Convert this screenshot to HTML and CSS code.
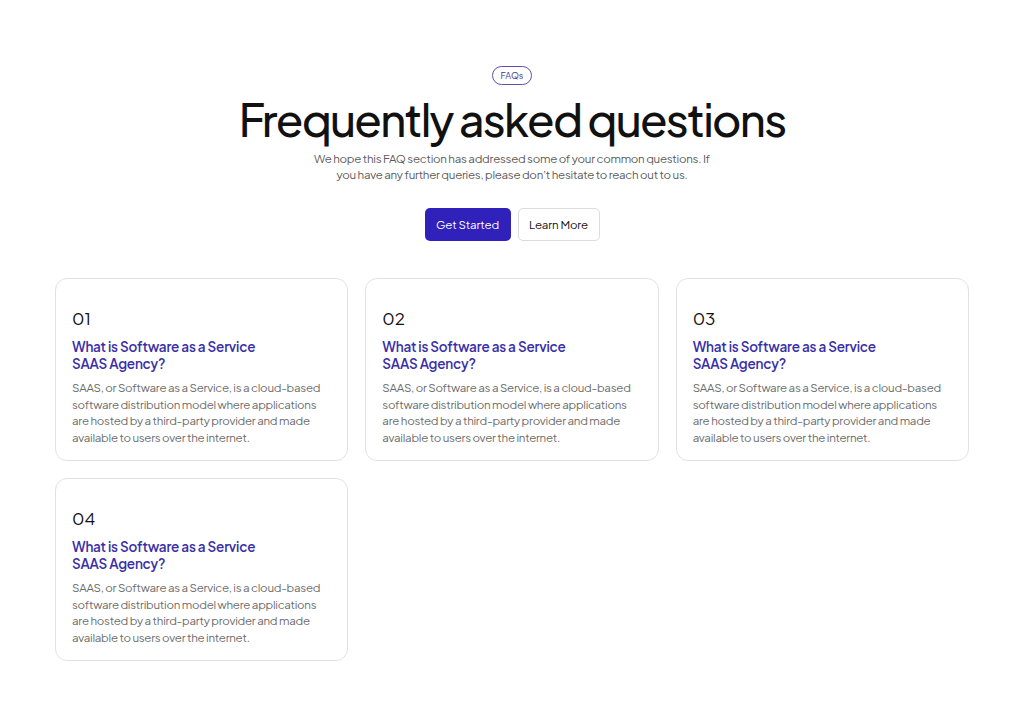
FILE: index.html
```html
<!DOCTYPE html>
<html lang="en">
<head>
<meta charset="utf-8">
<title>FAQs</title>
<link rel="stylesheet" href="styles.css">
</head>
<body>
<main class="faq">
  <header class="faq-head">
    <span class="badge">FAQs</span>
    <h1 class="title">Frequently asked questions</h1>
    <p class="lead">We hope this FAQ section has addressed some of your common questions. If you have any further queries, please don’t hesitate to reach out to us.</p>
    <div class="actions">
      <a class="btn btn-primary" href="#">Get Started</a>
      <a class="btn btn-outline" href="#">Learn More</a>
    </div>
  </header>
  <section class="grid">
    <article class="card">
      <div class="num">01</div>
      <h3 class="q">What is Software as a Service<br>SAAS Agency?</h3>
      <p class="a">SAAS, or Software as a Service, is a cloud-based software distribution model where applications are hosted by a third-party provider and made available to users over the internet.</p>
    </article>
    <article class="card">
      <div class="num">02</div>
      <h3 class="q">What is Software as a Service<br>SAAS Agency?</h3>
      <p class="a">SAAS, or Software as a Service, is a cloud-based software distribution model where applications are hosted by a third-party provider and made available to users over the internet.</p>
    </article>
    <article class="card">
      <div class="num">03</div>
      <h3 class="q">What is Software as a Service<br>SAAS Agency?</h3>
      <p class="a">SAAS, or Software as a Service, is a cloud-based software distribution model where applications are hosted by a third-party provider and made available to users over the internet.</p>
    </article>
    <article class="card">
      <div class="num">04</div>
      <h3 class="q">What is Software as a Service<br>SAAS Agency?</h3>
      <p class="a">SAAS, or Software as a Service, is a cloud-based software distribution model where applications are hosted by a third-party provider and made available to users over the internet.</p>
    </article>
  </section>
</main>
</body>
</html>
```
FILE: styles.css
```css
* { box-sizing: border-box; }
html, body { margin: 0; padding: 0; background: #ffffff; }
body {
  font-family: "Plus Jakarta Sans", Inter, "Noto Sans", sans-serif;
  color: #111111;
}
.faq {
  width: 914px;
  margin: 0 auto;
  padding-top: 66px;
}
.faq-head {
  display: flex;
  flex-direction: column;
  align-items: center;
  text-align: center;
}
.badge {
  display: inline-block;
  border: 1px solid #5a4fb0;
  color: #3b3596;
  font-size: 9px;
  line-height: 17px;
  padding: 0 8px;
  border-radius: 10px;
}
.title {
  margin: 7px 0 0;
  font-size: 45px;
  font-weight: 500;
  letter-spacing: -1.75px;
  line-height: 54px;
  color: #111111;
}
.lead {
  margin: 5px 0 0;
  width: 400px;
  font-size: 11.5px;
  line-height: 16px;
  color: #5a5a5a;
  letter-spacing: -0.25px;
}
.actions {
  display: flex;
  gap: 7px;
  margin-top: 25px;
}
.btn {
  display: inline-flex;
  align-items: center;
  justify-content: center;
  height: 33px;
  padding: 0;
  border-radius: 5px;
  font-size: 11.5px;
  text-decoration: none;
  letter-spacing: -0.1px;
  white-space: nowrap;
}
.btn-primary {
  background: #2f21b9;
  color: #ffffff;
  width: 86px;
}
.btn-outline {
  border: 1px solid #dcdcdc;
  color: #111111;
  width: 82px;
}
.grid {
  margin-top: 37px;
  display: grid;
  grid-template-columns: repeat(3, 1fr);
  gap: 17px 17px;
}
.card {
  border: 1px solid #e2e2e2;
  border-radius: 12px;
  height: 183px;
  padding: 28px 16px 0;
}
.num {
  font-size: 17px;
  line-height: 22px;
  color: #111111;
}
.q {
  margin: 9px 0 0;
  font-size: 13.5px;
  line-height: 17px;
  font-weight: 600;
  color: #3a2fa6;
  letter-spacing: -0.2px;
}
.a {
  margin: 8px 0 0;
  font-size: 11.5px;
  line-height: 16.5px;
  color: #6b6b6b;
  letter-spacing: -0.25px;
}
```
